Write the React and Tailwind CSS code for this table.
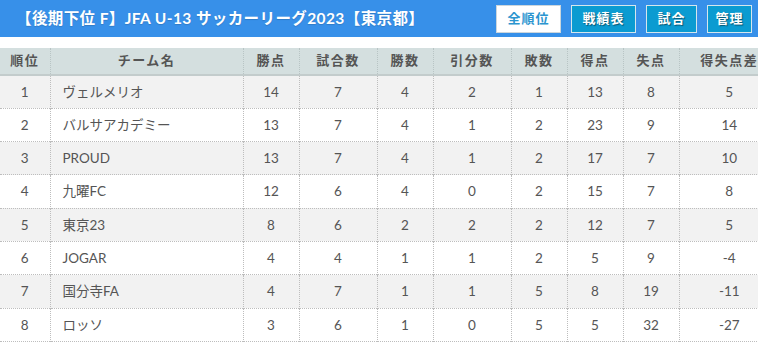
const rows = [
  [1, 'ヴェルメリオ', 14, 7, 4, 2, 1, 13, 8, 5],
  [2, 'バルサアカデミー', 13, 7, 4, 1, 2, 23, 9, 14],
  [3, 'PROUD', 13, 7, 4, 1, 2, 17, 7, 10],
  [4, '九曜FC', 12, 6, 4, 0, 2, 15, 7, 8],
  [5, '東京23', 8, 6, 2, 2, 2, 12, 7, 5],
  [6, 'JOGAR', 4, 4, 1, 1, 2, 5, 9, -4],
  [7, '国分寺FA', 4, 7, 1, 1, 5, 8, 19, -11],
  [8, 'ロッソ', 3, 6, 1, 0, 5, 5, 32, -27],
]

const cols = [
  { label: '順位', w: 'w-[50px]' },
  { label: 'チーム名', w: 'w-[193px]' },
  { label: '勝点', w: 'w-[56px]' },
  { label: '試合数', w: 'w-[78px]' },
  { label: '勝数', w: 'w-[56px]' },
  { label: '引分数', w: 'w-[78px]' },
  { label: '敗数', w: 'w-[56px]' },
  { label: '得点', w: 'w-[56px]' },
  { label: '失点', w: 'w-[56px]' },
  { label: '得失点差', w: 'w-[100px]' },
]

const font = { fontFamily: 'Lato, "Noto Sans CJK JP", sans-serif' }

export default function App() {
  return (
    <div className="w-[758px] h-[343px] overflow-hidden bg-white" style={font}>
      <div className="h-[37px] bg-[#3790e9] flex items-center justify-between pl-4 pr-[6px]">
        <h1 className="text-[15.5px] font-bold text-white tracking-[0.4px] [text-shadow:0_1px_1px_rgba(0,0,0,0.15)]">
          【後期下位 F】JFA U-13 サッカーリーグ2023【東京都】
        </h1>
        <div className="flex gap-[10px] pt-px">
          <button className="w-[65px] h-[28px] bg-white border border-[#ccd6dc] text-[#2b95cf] text-[13px] font-bold tracking-[1px]">
            全順位
          </button>
          {['戦績表', '試合', '管理'].map(t => (
            <button
              key={t}
              className={`${t === '戦績表' ? 'w-[65px]' : t === '試合' ? 'w-[51px]' : 'w-[45px]'} h-[28px] bg-[#0b9bd1] border border-[#d6e6ec] text-white text-[13px] font-bold tracking-[1px] [text-shadow:1px_1px_1px_rgba(0,0,0,0.45)]`}
            >
              {t}
            </button>
          ))}
        </div>
      </div>

      <table className="mt-[11px] border-collapse table-fixed w-[779px] text-[#555]">
        <thead>
          <tr className="bg-[#d4dfdf] border-b-2 border-[#c3cccc]">
            {cols.map((c, i) => (
              <th
                key={c.label}
                className={`${c.w} h-[27px] text-[13px] font-bold tracking-[1.5px] text-[#555] text-center ${i < cols.length - 1 ? 'border-r border-dotted border-r-[#b8c4c4]' : ''}`}
              >
                {c.label}
              </th>
            ))}
          </tr>
        </thead>
        <tbody>
          {rows.map((r, ri) => (
            <tr key={r[0]} className={`${ri % 2 === 0 ? 'bg-[#f2f2f2]' : 'bg-white'} border-b border-dotted border-[#bdbdbd]`}>
              {r.map((v, i) => (
                <td
                  key={i}
                  className={`h-[33.3px] text-[13.5px] ${i === 1 ? 'text-left pl-3' : 'text-center'} ${i < r.length - 1 ? 'border-r border-dotted border-r-[#bdbdbd]' : ''}`}
                >
                  {v}
                </td>
              ))}
            </tr>
          ))}
        </tbody>
      </table>
    </div>
  )
}
